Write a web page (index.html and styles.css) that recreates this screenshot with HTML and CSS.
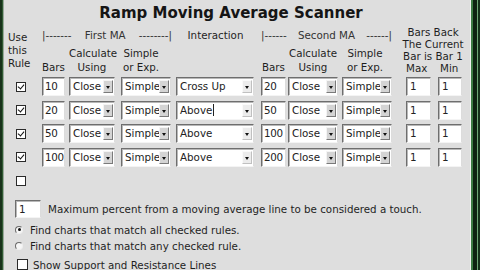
FILE: index.html
```html
<!DOCTYPE html>
<html>
<head>
<meta charset="utf-8">
<link rel="stylesheet" href="styles.css">
</head>
<body>
<div class="frame">
  <div class="edge-l"></div>
  <main class="panel">
    <h1 class="title">Ramp Moving Average Scanner</h1>
    <div class="grid">
      <div class="h-use">Use<br>this<br>Rule</div>
      <div class="h-group g1"><span>|-------</span><span>First MA</span><span>--------|</span></div>
      <div class="h-inter">Interaction</div>
      <div class="h-group g2"><span>|------</span><span>Second MA</span><span>------|</span></div>
      <div class="h-back">Bars Back<br>The Current<br>Bar is Bar 1<div class="maxmin"><span class="mx">Max</span><span class="mn">Min</span></div></div>
      <div class="h-sub s-bars">Bars</div>
      <div class="h-sub s-calc">Calculate<br>Using</div>
      <div class="h-sub s-simp">Simple<br>or Exp.</div>
      <div class="h-sub s-bars2">Bars</div>
      <div class="h-sub s-calc2">Calculate<br>Using</div>
      <div class="h-sub s-simp2">Simple<br>or Exp.</div>

      <span class="cb checked"></span>
      <span class="inp w-bars">10</span>
      <span class="sel w-close">Close<i class="btn"></i></span>
      <span class="sel w-simp">Simple<i class="btn"></i></span>
      <span class="sel w-inter">Cross Up<i class="btn flat"></i></span>
      <span class="inp w-bars2">20</span>
      <span class="sel w-close2">Close<i class="btn"></i></span>
      <span class="sel w-simp2">Simple<i class="btn"></i></span>
      <span class="inp w-max">1</span>
      <span class="inp w-min">1</span>

      <span class="cb checked"></span>
      <span class="inp w-bars">20</span>
      <span class="sel w-close">Close<i class="btn"></i></span>
      <span class="sel w-simp">Simple<i class="btn"></i></span>
      <span class="sel w-inter">Above<span class="caret"></span><i class="btn flat"></i></span>
      <span class="inp w-bars2">50</span>
      <span class="sel w-close2">Close<i class="btn"></i></span>
      <span class="sel w-simp2">Simple<i class="btn"></i></span>
      <span class="inp w-max">1</span>
      <span class="inp w-min">1</span>

      <span class="cb checked"></span>
      <span class="inp w-bars">50</span>
      <span class="sel w-close">Close<i class="btn"></i></span>
      <span class="sel w-simp">Simple<i class="btn"></i></span>
      <span class="sel w-inter">Above<i class="btn flat"></i></span>
      <span class="inp w-bars2">100</span>
      <span class="sel w-close2">Close<i class="btn"></i></span>
      <span class="sel w-simp2">Simple<i class="btn"></i></span>
      <span class="inp w-max">1</span>
      <span class="inp w-min">1</span>

      <span class="cb checked"></span>
      <span class="inp w-bars">100</span>
      <span class="sel w-close">Close<i class="btn"></i></span>
      <span class="sel w-simp">Simple<i class="btn"></i></span>
      <span class="sel w-inter">Above<i class="btn flat"></i></span>
      <span class="inp w-bars2">200</span>
      <span class="sel w-close2">Close<i class="btn"></i></span>
      <span class="sel w-simp2">Simple<i class="btn"></i></span>
      <span class="inp w-max">1</span>
      <span class="inp w-min">1</span>

      <span class="cb"></span>
    </div>

    <div class="opt-touch"><span class="inp w-touch">1</span><span class="touch-text">Maximum percent from a moving average line to be considered a touch.</span></div>
    <div class="opt-radio first"><span class="radio on"></span>Find charts that match all checked rules.</div>
    <div class="opt-radio"><span class="radio"></span>Find charts that match any checked rule.</div>
    <div class="opt-check"><span class="cb big"></span>Show Support and Resistance Lines</div>
  </main>
  <div class="edge-r"></div>
</div>
</body>
</html>
```

FILE: styles.css
```css
* { box-sizing: border-box; }
html, body { margin: 0; padding: 0; }
body {
  width: 480px;
  height: 270px;
  overflow: hidden;
  background: #dedede;
  font-family: "DejaVu Sans", Verdana, sans-serif;
  font-size: 10.3px;
  color: #1e1e1e;
}
.frame {
  display: flex;
  width: 480px;
  height: 270px;
}
.edge-l {
  width: 4px;
  flex: none;
  background: linear-gradient(to right, #18321a 0 2px, #2f5a32 2px 3px, #9aa89a 3px 4px);
}
.edge-r {
  width: 10px;
  flex: none;
  background: linear-gradient(to right, #f2f2f2 0 1px, #3d7c44 1px 3px, #0e2311 3px 7px, #6fa776 7px 8px, #15301a 8px);
}
.panel {
  flex: 1;
  padding-left: 4px;
  background: #dedede;
}
.title {
  margin: 0;
  height: 27px;
  line-height: 27px;
  font-size: 15px;
  font-weight: bold;
  text-align: center;
  padding-right: 16px;
  color: #151515;
}
.grid {
  display: grid;
  grid-template-columns: 34px 27px 52px 55px 85px 27px 54px 58px 38px 28px;
  grid-template-rows: 16px 32px repeat(5, 23.5px);
}
.h-use {
  grid-column: 1;
  grid-row: 1 / 3;
  line-height: 13px;
  padding-top: 3.5px;
}
.h-group {
  grid-row: 1;
  display: flex;
  justify-content: space-between;
  line-height: 16px;
  color: #333;
}
.g1 { grid-column: 2 / 5; width: 130px; }
.g2 { grid-column: 6 / 9; width: 131px; }
.h-inter {
  grid-row: 1;
  grid-column: 5;
  line-height: 16px;
  text-align: center;
  padding-right: 6px;
}
.h-back {
  grid-column: 9 / 11;
  grid-row: 1 / 3;
  align-self: end;
  line-height: 12px;
  text-align: center;
  padding-bottom: 1px;
  white-space: nowrap;
}
.maxmin { display: flex; text-align: left; }
.mx { width: 38px; padding-left: 6px; }
.mn { width: 28px; padding-left: 2px; }
.h-sub {
  grid-row: 2;
  align-self: end;
  line-height: 14px;
  padding-bottom: 1px;
  text-align: center;
  white-space: nowrap;
}
.s-bars { grid-column: 2; text-align: left; }
.s-calc { grid-column: 3; width: 46px; }
.s-simp { grid-column: 4; width: 40px; }
.s-bars2 { grid-column: 6; text-align: left; padding-left: 1px; }
.s-calc2 { grid-column: 7; width: 50px; }
.s-simp2 { grid-column: 8; width: 46px; }

.cb {
  grid-column: 1;
  align-self: center;
  justify-self: start;
  margin-left: 8px;
  width: 10px;
  height: 10px;
  border: 1px solid #2a2a2a;
  background: #fff;
  position: relative;
}
.cb.checked::after {
  content: "";
  position: absolute;
  left: 2px;
  top: 0px;
  width: 3px;
  height: 5px;
  border-right: 1.6px solid #111;
  border-bottom: 1.6px solid #111;
  transform: rotate(40deg);
}
.inp, .sel {
  align-self: center;
  justify-self: start;
  height: 19px;
  background: #fff;
  border-style: solid;
  border-width: 1px;
  border-color: #6e6e6e #dcdcdc #f4f4f4 #6e6e6e;
  box-shadow: inset 1px 1px 0 #b8b8b8;
  line-height: 17px;
  padding-left: 3px;
  white-space: nowrap;
  overflow: hidden;
  position: relative;
  color: #222;
}
.w-bars { width: 23px; padding-left: 2px; letter-spacing: -0.3px; }
.w-close { width: 46px; }
.w-simp { width: 50px; }
.w-inter { width: 78px; }
.w-bars2 { width: 25px; padding-left: 2px; letter-spacing: -0.3px; }
.w-close2 { width: 50px; }
.w-simp2 { width: 50px; }
.w-max { width: 25px; margin-left: 6px; }
.w-min { width: 24px; }
.btn {
  position: absolute;
  right: 1px;
  top: 2px;
  width: 10px;
  height: 13px;
  background: #d4d4d4;
  border-style: solid;
  border-width: 1px;
  border-color: #f4f4f4 #7a7a7a #7a7a7a #f4f4f4;
}
.btn.flat { background: #ececec; border-color: #fafafa #c0c0c0 #c0c0c0 #fafafa; }
.btn::after {
  content: "";
  position: absolute;
  left: 2px;
  top: 5px;
  border-left: 2.5px solid transparent;
  border-right: 2.5px solid transparent;
  border-top: 3px solid #111;
}
.caret {
  display: inline-block;
  width: 1px;
  height: 12px;
  background: #222;
  vertical-align: -2px;
  margin-left: 1px;
}
.opt-touch {
  display: flex;
  align-items: center;
  margin: 7px 0 0 7px;
  height: 18px;
}
.w-touch { width: 26px; height: 18px; line-height: 16px; }
.touch-text { margin-left: 7px; }
.opt-radio {
  display: flex;
  align-items: center;
  height: 16px;
  margin-left: 7px;
}
.opt-radio.first { margin-top: 4px; }
.radio {
  width: 8px;
  height: 8px;
  border-radius: 50%;
  border: 1px solid;
  border-color: #6a6a6a #eeeeee #eeeeee #6a6a6a;
  background: #f6f6f6;
  margin-right: 7px;
  position: relative;
}
.radio.on::after {
  content: "";
  position: absolute;
  left: 1.5px;
  top: 1.5px;
  width: 3px;
  height: 3px;
  border-radius: 50%;
  background: #111;
}
.opt-check {
  display: flex;
  align-items: center;
  height: 18px;
  margin-left: 9px;
  margin-top: 2px;
}
.cb.big { margin-left: 0; margin-right: 5px; width: 11px; height: 11px; }
```
